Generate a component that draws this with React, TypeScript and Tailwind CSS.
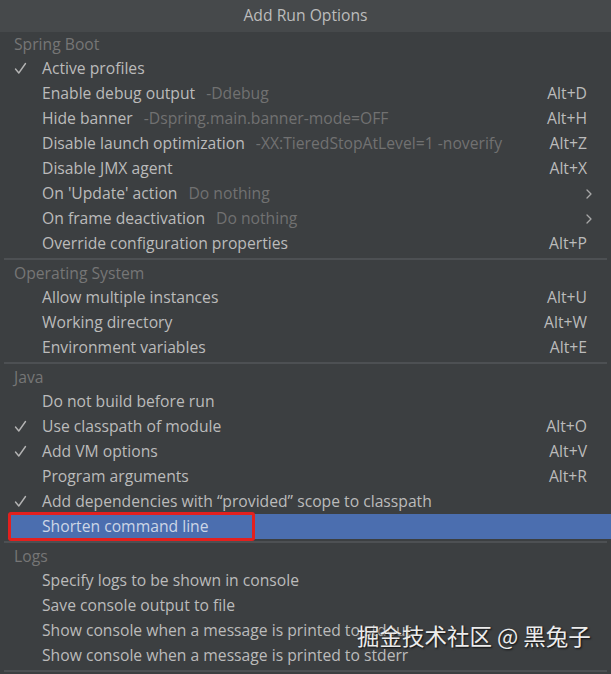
import React from "react";

type Item = {
  label: string;
  hint?: string;
  shortcut?: string;
  checked?: boolean;
  submenu?: boolean;
  selected?: boolean;
};

type Group = { title: string; items: Item[] };

const groups: Group[] = [
  {
    title: "Spring Boot",
    items: [
      { label: "Active profiles", checked: true },
      { label: "Enable debug output", hint: "-Ddebug", shortcut: "Alt+D" },
      { label: "Hide banner", hint: "-Dspring.main.banner-mode=OFF", shortcut: "Alt+H" },
      { label: "Disable launch optimization", hint: "-XX:TieredStopAtLevel=1 -noverify", shortcut: "Alt+Z" },
      { label: "Disable JMX agent", shortcut: "Alt+X" },
      { label: "On 'Update' action", hint: "Do nothing", submenu: true },
      { label: "On frame deactivation", hint: "Do nothing", submenu: true },
      { label: "Override configuration properties", shortcut: "Alt+P" },
    ],
  },
  {
    title: "Operating System",
    items: [
      { label: "Allow multiple instances", shortcut: "Alt+U" },
      { label: "Working directory", shortcut: "Alt+W" },
      { label: "Environment variables", shortcut: "Alt+E" },
    ],
  },
  {
    title: "Java",
    items: [
      { label: "Do not build before run" },
      { label: "Use classpath of module", checked: true, shortcut: "Alt+O" },
      { label: "Add VM options", checked: true, shortcut: "Alt+V" },
      { label: "Program arguments", shortcut: "Alt+R" },
      { label: "Add dependencies with \u201cprovided\u201d scope to classpath", checked: true },
      { label: "Shorten command line", selected: true },
    ],
  },
  {
    title: "Logs",
    items: [
      { label: "Specify logs to be shown in console" },
      { label: "Save console output to file" },
      { label: "Show console when a message is printed to stdout" },
      { label: "Show console when a message is printed to stderr" },
    ],
  },
];

function Check() {
  return (
    <svg width="13" height="13" viewBox="0 0 13 13" fill="none">
      <path d="M1.5 7 L4.8 11 L11.5 1.5" stroke="#b4b4b4" strokeWidth="1.4" strokeLinecap="round" strokeLinejoin="round" />
    </svg>
  );
}

function Chevron() {
  return (
    <svg width="8" height="12" viewBox="0 0 8 12" fill="none">
      <path d="M2 2 L6 6 L2 10" stroke="#a8a8a8" strokeWidth="1.3" strokeLinecap="round" strokeLinejoin="round" />
    </svg>
  );
}

function Row({ item }: { item: Item }) {
  const row = (
    <div
      className={
        "flex h-[25px] items-center " +
        (item.selected ? "ml-[8px] bg-[#4b6eaf] text-[#cdd6e6]" : "text-[#bbbbbb]")
      }
    >
      <div className={"flex items-center justify-center " + (item.selected ? "w-[34px]" : "w-[42px]")}>
        {item.checked ? <span className="ml-[-2px] flex">{<Check />}</span> : null}
      </div>
      <span className="whitespace-nowrap">{item.label}</span>
      {item.hint ? <span className="ml-[11px] whitespace-nowrap text-[#717171]">{item.hint}</span> : null}
      <div className="flex-1" />
      {item.shortcut ? <span className="mr-[24px] whitespace-nowrap">{item.shortcut}</span> : null}
      {item.submenu ? (
        <span className="mr-[18px] flex">
          <Chevron />
        </span>
      ) : null}
    </div>
  );
  if (item.selected) {
    return (
      <div className="relative">
        {row}
        <div className="pointer-events-none absolute left-[8px] top-[-2px] h-[29px] w-[247px] rounded-[3px] border-[3px] border-[#e3201e]" />
      </div>
    );
  }
  return row;
}

function Separator() {
  return (
    <div className="flex h-[5px] items-center px-[4px]">
      <div className="h-[2px] w-full bg-[#4d5053]" />
    </div>
  );
}

export default function App() {
  return (
    <div
      className="relative h-[674px] w-[611px] overflow-hidden bg-[#3c3f41] text-[15.7px]"
      style={{ fontFamily: '"Open Sans", "Noto Sans", sans-serif' }}
    >
      <div className="flex h-[32px] items-center justify-center pb-[1px] bg-[#46494b] text-[#bcbcbc]">Add Run Options</div>
      {groups.map((g, gi) => (
        <div key={g.title}>
          {gi > 0 ? <Separator /> : null}
          <div className="flex h-[24px] items-center pl-[14px] pt-[2px] text-[#767676]">{g.title}</div>
          {g.items.map((it) => (
            <Row key={it.label} item={it} />
          ))}
        </div>
      ))}
      <Separator />
      <div
        className="absolute left-[357px] top-[619px] whitespace-nowrap text-[22.5px] text-[#ececec]"
        style={{
          fontFamily: '"Noto Sans CJK SC", sans-serif',
          textShadow: "1px 1px 2px rgba(0,0,0,0.8)",
        }}
      >
        掘金技术社区 @ 黑兔子
      </div>
    </div>
  );
}
